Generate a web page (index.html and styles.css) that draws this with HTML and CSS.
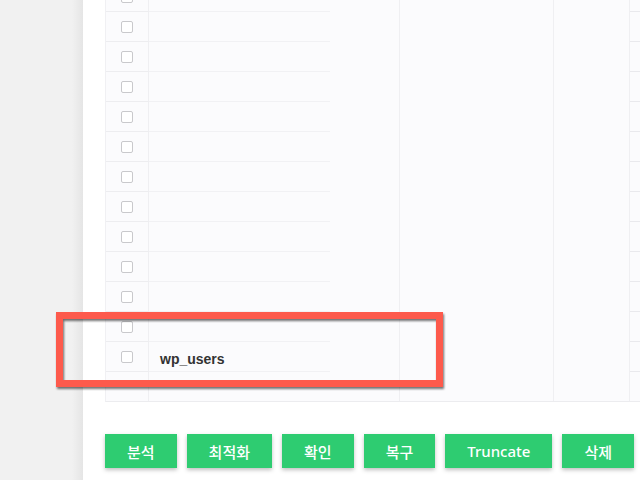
FILE: index.html
```html
<!DOCTYPE html>
<html>
  <head>
    <title>Database Tables</title>
    <link rel="stylesheet" href="styles.css">
  </head>
  <body>
    <div class="sidebar"></div>

    <div class="main">
      <div class="table">
        <div class="row"><div class="cell chk"><span class="box"></span></div><div class="cell name"></div><div class="cell c3"></div><div class="cell c4"></div><div class="cell c5"></div></div>
        <div class="row"><div class="cell chk"><span class="box"></span></div><div class="cell name"></div><div class="cell c3"></div><div class="cell c4"></div><div class="cell c5"></div></div>
        <div class="row"><div class="cell chk"><span class="box"></span></div><div class="cell name"></div><div class="cell c3"></div><div class="cell c4"></div><div class="cell c5"></div></div>
        <div class="row"><div class="cell chk"><span class="box"></span></div><div class="cell name"></div><div class="cell c3"></div><div class="cell c4"></div><div class="cell c5"></div></div>
        <div class="row"><div class="cell chk"><span class="box"></span></div><div class="cell name"></div><div class="cell c3"></div><div class="cell c4"></div><div class="cell c5"></div></div>
        <div class="row"><div class="cell chk"><span class="box"></span></div><div class="cell name"></div><div class="cell c3"></div><div class="cell c4"></div><div class="cell c5"></div></div>
        <div class="row"><div class="cell chk"><span class="box"></span></div><div class="cell name"></div><div class="cell c3"></div><div class="cell c4"></div><div class="cell c5"></div></div>
        <div class="row"><div class="cell chk"><span class="box"></span></div><div class="cell name"></div><div class="cell c3"></div><div class="cell c4"></div><div class="cell c5"></div></div>
        <div class="row"><div class="cell chk"><span class="box"></span></div><div class="cell name"></div><div class="cell c3"></div><div class="cell c4"></div><div class="cell c5"></div></div>
        <div class="row"><div class="cell chk"><span class="box"></span></div><div class="cell name"></div><div class="cell c3"></div><div class="cell c4"></div><div class="cell c5"></div></div>
        <div class="row"><div class="cell chk"><span class="box"></span></div><div class="cell name"></div><div class="cell c3"></div><div class="cell c4"></div><div class="cell c5"></div></div>
        <div class="row"><div class="cell chk"><span class="box"></span></div><div class="cell name"></div><div class="cell c3"></div><div class="cell c4"></div><div class="cell c5"></div></div>
        <div class="row"><div class="cell chk"><span class="box"></span></div><div class="cell name">wp_users</div><div class="cell c3"></div><div class="cell c4"></div><div class="cell c5"></div></div>
        <div class="row last"><div class="cell chk"></div><div class="cell name"></div><div class="cell c3"></div><div class="cell c4"></div><div class="cell c5"></div></div>
      </div>

      <div class="actions">
        <button>분석</button>
        <button>최적화</button>
        <button>확인</button>
        <button>복구</button>
        <button>Truncate</button>
        <button>삭제</button>
      </div>
    </div>

    <div class="highlight"></div>
  </body>
</html>
```

FILE: styles.css
```css
body {
  margin: 0;
  padding: 0;
  display: flex;
  height: 480px;
  overflow: hidden;
  background: #f1f1f1;
  font-family: "Liberation Sans", "Noto Sans CJK KR", sans-serif;
}

.sidebar {
  width: 83px;
  flex-shrink: 0;
  background: linear-gradient(to right, #f1f1f1 72px, #e5e5e5 83px);
}

.main {
  flex: 1;
  background: #fff;
  padding-left: 22px;
  overflow: hidden;
}

.table {
  margin-top: -18px;
  width: 580px;
  background: #fbfbfd;
  border-left: 1px solid #f0f0f3;
  border-bottom: 1px solid #ececef;
}

.row {
  display: grid;
  grid-template-columns: 43px 251px 154px 76px 1fr;
  height: 30px;
}

.row.last {
  height: 29px;
}

.cell {
  box-sizing: border-box;
  position: relative;
  border-right: 1px solid #efeff2;
}

.chk {
  display: flex;
  justify-content: center;
  align-items: center;
  border-bottom: 1px solid #ededf0;
  padding-top: 1px;
}

.box {
  width: 10px;
  height: 10px;
  border: 1px solid #c9c9cc;
  border-radius: 2px;
  background: #fff;
}

.name {
  padding: 9px 0 0 11px;
  font-size: 14px;
  font-weight: bold;
  color: #333;
}

.name::after {
  content: "";
  position: absolute;
  left: 0;
  bottom: 0;
  width: 181px;
  height: 1px;
  background: #f1f1f4;
}

.c5 {
  border-right: none;
  border-bottom: 1px solid #e9e9ed;
}

.last .chk,
.last .c5 {
  border-bottom: none;
}

.last .name::after {
  display: none;
}

.actions {
  display: flex;
  gap: 10px;
  margin-top: 32px;
}

.actions button {
  height: 34px;
  padding: 0 22px;
  border: none;
  background: #2ecc71;
  color: #fff;
  font-family: "Noto Sans", "Noto Sans CJK KR", sans-serif;
  font-size: 15px;
  font-weight: 500;
  box-shadow: 0 2px 4px rgba(0, 0, 0, 0.25);
  cursor: pointer;
}

.highlight {
  position: absolute;
  left: 56px;
  top: 312px;
  width: 387px;
  height: 75px;
  box-sizing: border-box;
  border: 7px solid #fd5a4c;
  filter: drop-shadow(1px 2px 1px rgba(0, 0, 0, 0.55));
}
```
